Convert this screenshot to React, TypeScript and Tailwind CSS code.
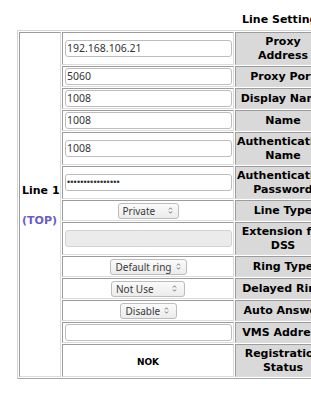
import React from "react";

const cellBorder =
  "border border-t-[#9c9c9c] border-l-[#9c9c9c] border-b-[#dcdcdc] border-r-[#dcdcdc]";

function Header({ children }: { children: React.ReactNode }) {
  return (
    <div
      className={`${cellBorder} col-start-3 bg-[#d9d9d9] flex items-center justify-center px-[1px] text-center font-['DejaVu_Sans',sans-serif] font-bold text-[11px] leading-[14px] text-black`}
    >
      <span className="block w-[92px] shrink-0 whitespace-nowrap">{children}</span>
    </div>
  );
}

function Cell({
  children,
  center = false,
  extra = "",
}: {
  children?: React.ReactNode;
  center?: boolean;
  extra?: string;
}) {
  return (
    <div
      className={`${cellBorder} col-start-2 flex items-center ${
        center ? "justify-center" : "pl-[2px]"
      } ${extra}`}
    >
      {children}
    </div>
  );
}

function TextBox({ value }: { value: string }) {
  return (
    <div className="w-[167px] h-[17px] border border-[#bdbdbd] rounded-[3px] bg-white pl-[1px] font-['Noto_Sans',sans-serif] text-[10.5px] leading-[15px] text-[#333]">
      {value}
    </div>
  );
}

function Arrows() {
  return (
    <svg width="5" height="9" viewBox="0 0 5 9" className="shrink-0">
      <path d="M1 3.5 L2.5 1.8 L4 3.5" fill="none" stroke="#666" strokeWidth="0.9" />
      <path d="M1 5.5 L2.5 7.2 L4 5.5" fill="none" stroke="#666" strokeWidth="0.9" />
    </svg>
  );
}

function Select({
  value,
  w,
  pl,
  pr,
}: {
  value: string;
  w: string;
  pl: string;
  pr: string;
}) {
  return (
    <div
      className={`${w} ${pl} ${pr} h-[16px] flex items-center justify-between border border-[#bcbcbc] rounded-[3px] bg-gradient-to-b from-[#fafafa] to-[#ececec] font-['Noto_Sans',sans-serif] text-[10px] leading-[14px] text-[#3a3a3a] whitespace-nowrap`}
    >
      <span>{value}</span>
      <Arrows />
    </div>
  );
}

export default function App() {
  return (
    <div className="w-[311px] h-[400px] overflow-hidden bg-white">
      <div className="pt-[13px]">
        <div className="ml-[235px] w-[96px] text-center whitespace-nowrap font-['DejaVu_Sans',sans-serif] font-bold text-[11px] leading-[14px] text-black">
          Line Settings
        </div>
        <div className="ml-[17px] mt-[3px] w-[316px] grid grid-cols-[42px_172px_96px] grid-rows-[33px_21px_21px_21px_33px_33px_21px_33px_21px_21px_21px_21px_33px] gap-[1px] p-[1px] border border-t-[#d4d4d4] border-l-[#d4d4d4] border-b-[#a8a8a8] border-r-[#a8a8a8]">
          <div
            className={`${cellBorder} col-start-1 row-start-1 [grid-row:1/span_13] flex flex-col items-start justify-center pl-[2px] pt-[3px] font-['DejaVu_Sans',sans-serif] font-bold text-[11px] leading-[14px] whitespace-nowrap`}
          >
            <span className="text-black">Line 1</span>
            <span className="mt-[16px] text-[#6a5acd]">(TOP)</span>
          </div>

          <Cell>
            <TextBox value="192.168.106.21" />
          </Cell>
          <Header>
            Proxy
            <br />
            Address
          </Header>

          <Cell>
            <TextBox value="5060" />
          </Cell>
          <Header>Proxy Port</Header>

          <Cell>
            <TextBox value="1008" />
          </Cell>
          <Header>Display Name</Header>

          <Cell>
            <TextBox value="1008" />
          </Cell>
          <Header>Name</Header>

          <Cell>
            <TextBox value="1008" />
          </Cell>
          <Header>
            Authentication
            <br />
            Name
          </Header>

          <Cell>
            <div className="w-[167px] h-[17px] border border-[#bdbdbd] rounded-[3px] bg-white pl-[1px] font-['Liberation_Sans',sans-serif] text-[9px] leading-[15px] tracking-[0.15px] text-[#333] whitespace-nowrap overflow-hidden">
              ••••••••••••••••
            </div>
          </Cell>
          <Header>
            Authentication
            <br />
            Password
          </Header>

          <Cell center>
            <Select value="Private" w="w-[61px]" pl="pl-[4px]" pr="pr-[5px]" />
          </Cell>
          <Header>Line Type</Header>

          <Cell>
            <div className="w-[167px] h-[17px] border border-[#d2d2d2] rounded-[3px] bg-[#ebebeb]" />
          </Cell>
          <Header>
            Extension for
            <br />
            DSS
          </Header>

          <Cell center>
            <Select value="Default ring" w="w-[77px]" pl="pl-[5px]" pr="pr-[5px]" />
          </Cell>
          <Header>Ring Type</Header>

          <Cell center>
            <Select value="Not Use" w="w-[74px]" pl="pl-[4px]" pr="pr-[7px]" />
          </Cell>
          <Header>Delayed Ring</Header>

          <Cell center>
            <Select value="Disable" w="w-[57px]" pl="pl-[5px]" pr="pr-[7px]" />
          </Cell>
          <Header>Auto Answer</Header>

          <Cell>
            <TextBox value="" />
          </Cell>
          <Header>VMS Address</Header>

          <Cell center extra="pt-[3px]">
            <span className="font-['DejaVu_Sans',sans-serif] font-bold text-[9px] leading-[12px] text-black">
              NOK
            </span>
          </Cell>
          <Header>
            Registration
            <br />
            Status
          </Header>
        </div>
      </div>
    </div>
  );
}
